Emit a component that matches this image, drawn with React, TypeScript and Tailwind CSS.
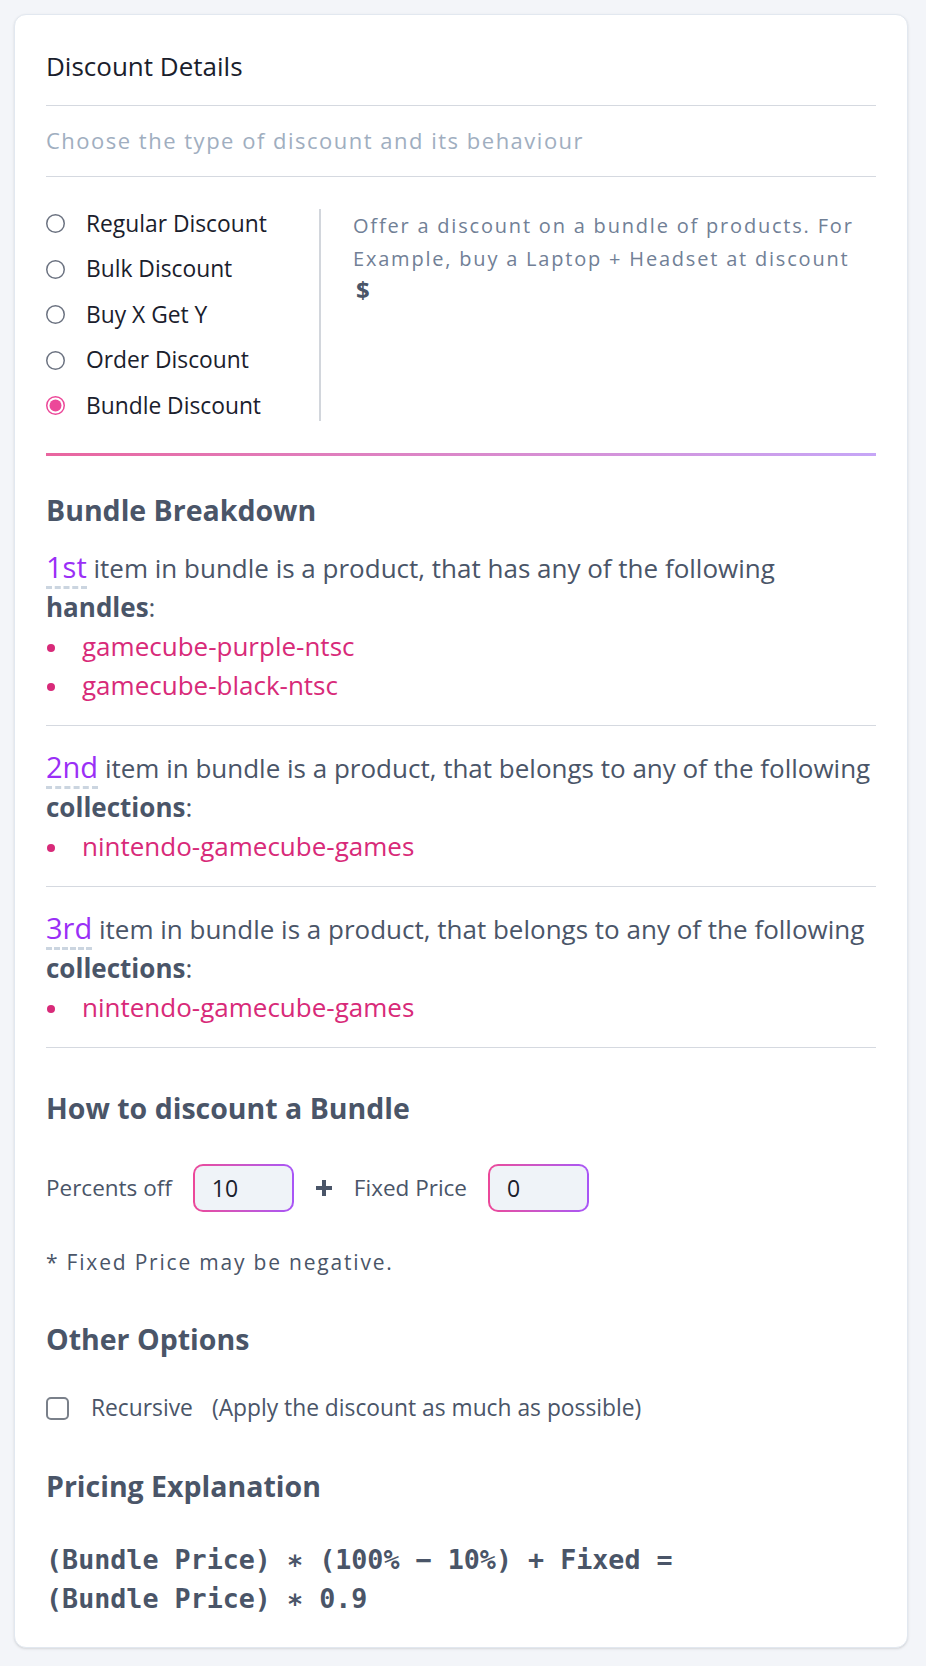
import React from "react";

const discountTypes = [
  "Regular Discount",
  "Bulk Discount",
  "Buy X Get Y",
  "Order Discount",
  "Bundle Discount",
];

const bundleItems = [
  {
    ordinal: "1st",
    rule: "has",
    kind: "handles",
    values: ["gamecube-purple-ntsc", "gamecube-black-ntsc"],
  },
  {
    ordinal: "2nd",
    rule: "belongs to",
    kind: "collections",
    values: ["nintendo-gamecube-games"],
  },
  {
    ordinal: "3rd",
    rule: "belongs to",
    kind: "collections",
    values: ["nintendo-gamecube-games"],
  },
];

const Radio = ({ checked }: { checked: boolean }) => (
  <svg width="19" height="19" viewBox="0 0 19 19" className="shrink-0">
    <circle
      cx="9.5"
      cy="9.5"
      r="8.75"
      fill="white"
      stroke={checked ? "#ec4899" : "#6b7280"}
      strokeWidth="1.5"
    />
    {checked && <circle cx="9.5" cy="9.5" r="6" fill="#ec4899" />}
  </svg>
);

const GradientInput = ({ value }: { value: string }) => (
  <div className="h-[48px] w-[101px] rounded-[10px] bg-linear-to-r from-[#ec4899] to-[#a855f7] p-[2px]">
    <input
      readOnly
      value={value}
      className="h-full w-full rounded-[8px] bg-[#eff3f8] pl-[17px] text-[23px] text-[#1a202c] outline-none"
    />
  </div>
);

const App = () => {
  return (
    <div className="min-h-[1666px] bg-[#f3f5f9] pl-[14px] pt-[14px] font-['Open_Sans',sans-serif]">
      <div className="w-[894px] rounded-xl border border-[#e2e8f0] bg-white px-[31px] pb-[29px] pt-[35px] shadow-sm">
        <h2 className="text-[26px] leading-[32px] text-[#1a202c]">
          Discount Details
        </h2>
        <div className="mt-[23px] h-px bg-[#d5d9e0]" />
        <p className="mt-[19px] text-[22px] leading-[30px] tracking-[1.5px] text-[#a0aec0]">
          Choose the type of discount and its behaviour
        </p>
        <div className="mt-[21px] h-px bg-[#d5d9e0]" />

        <div className="mt-[23px] flex">
          <div className="w-[273px] pt-px">
            {discountTypes.map((type, i) => (
              <label key={type} className="flex h-[45.5px] items-center">
                <Radio checked={i === 4} />
                <span className="ml-[21px] text-[22.8px] text-[#1a202c]">
                  {type}
                </span>
              </label>
            ))}
          </div>
          <div className="mb-[8px] mt-[9px] flex-1 border-l-2 border-[#d2d6dc] pl-[32px] text-[20px] leading-[33px] tracking-[1.8px] text-[#718096]">
            Offer a discount on a bundle of products. For Example, buy a
            Laptop + Headset at discount
            <div className="-mt-[2px] ml-[3px] text-[24px] font-bold text-[#4a5568]">
              $
            </div>
          </div>
        </div>

        <div className="mt-[24px] h-[3px] bg-linear-to-r from-[#e9659f] to-[#c6a6f7]" />

        <h3 className="mt-[36px] text-[28.5px] font-bold leading-[36px] text-[#4a5568]">
          Bundle Breakdown
        </h3>
        {bundleItems.map((item, idx) => (
          <div
            key={item.ordinal}
            className={`border-b border-[#d5d9e0] pb-[20px] ${
              idx === 0 ? "pt-[19px]" : "pt-[21px]"
            }`}
          >
            <p className="text-[26px] leading-[39px] text-[#4a5568]">
              <span className="border-b-[3px] border-dashed border-[#cbd5e0] text-[29px] text-[#9a2ff6]">
                {item.ordinal}
              </span>{" "}
              item in bundle is a product, that {item.rule} any of the
              following <span className="font-bold">{item.kind}</span>:
            </p>
            <ul>
              {item.values.map((v, i) => (
                <li
                  key={i}
                  className="flex items-center text-[26px] leading-[39px] text-[#d82a79]"
                >
                  <span className="ml-[1px] mr-[27px] mt-[3px] h-[8px] w-[8px] rounded-full bg-[#d82a79]" />
                  {v}
                </li>
              ))}
            </ul>
          </div>
        ))}

        <h3 className="mt-[42px] text-[28.5px] font-bold leading-[36px] text-[#4a5568]">
          How to discount a Bundle
        </h3>
        <div className="mt-[38px] flex items-center gap-[21px] text-[22.5px] text-[#4a5568]">
          <span>Percents off</span>
          <GradientInput value="10" />
          <svg width="18" height="18" viewBox="0 0 18 18">
            <path
              d="M9 1v16M1 9h16"
              stroke="#4a5568"
              strokeWidth="4"
              strokeLinecap="butt"
            />
          </svg>
          <span>Fixed Price</span>
          <GradientInput value="0" />
        </div>
        <p className="mt-[35px] text-[21px] leading-[30px] tracking-[1.8px] text-[#4a5568]">
          * Fixed Price may be negative.
        </p>

        <h3 className="mt-[44px] text-[28.5px] font-bold leading-[36px] text-[#4a5568]">
          Other Options
        </h3>
        <label className="mt-[37px] flex h-[30px] items-center text-[22.8px] text-[#4a5568]">
          <span className="h-[23px] w-[23px] rounded-[5px] border-2 border-[#7a808a] bg-white" />
          <span className="ml-[22px]">Recursive</span>
          <span className="ml-[19px]">
            (Apply the discount as much as possible)
          </span>
        </label>

        <h3 className="mt-[44px] text-[28.5px] font-bold leading-[36px] text-[#4a5568]">
          Pricing Explanation
        </h3>
        <div className="mt-[36px] font-['DejaVu_Sans_Mono',monospace] text-[26.7px] font-bold leading-[39.3px] text-[#4a5568]">
          <div>(Bundle Price) ∗ (100% − 10%) + Fixed =</div>
          <div>(Bundle Price) ∗ 0.9</div>
        </div>
      </div>
    </div>
  );
};

export default App;
